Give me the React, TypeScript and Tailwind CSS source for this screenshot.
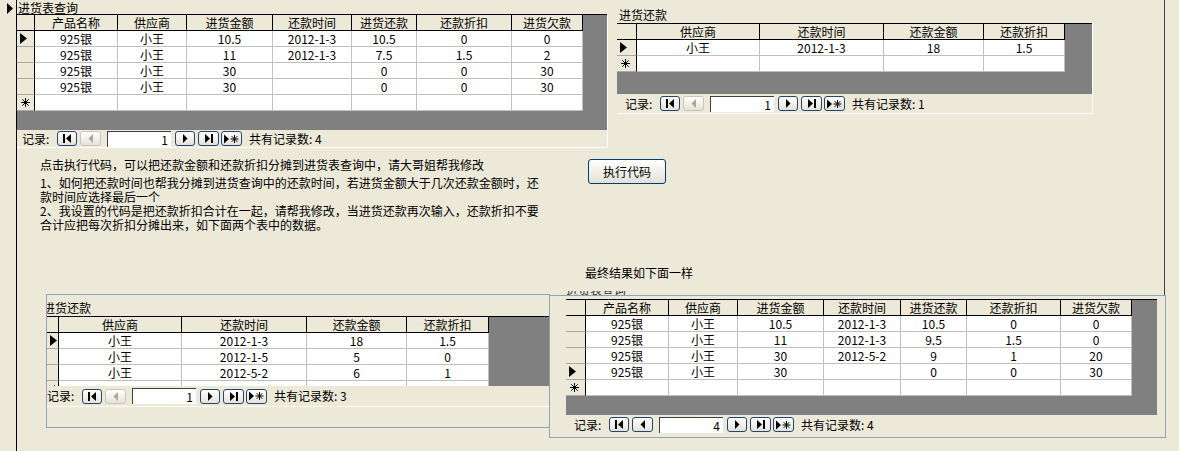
import React from 'react';

type Sheet = {
  sel: string;
  cols: string[];
  labels: string[];
  rows: string[][];
  current: number;
};

const mainLabels = ['产品名称', '供应商', '进货金额', '还款时间', '进货还款', '还款折扣', '进货欠款'];
const payLabels = ['供应商', '还款时间', '还款金额', '还款折扣'];

const topLeft: Sheet = {
  sel: 'w-[18px]',
  cols: ['w-[83px]', 'w-[69px]', 'w-[86px]', 'w-[79px]', 'w-[65px]', 'w-[95px]', 'w-[71px]'],
  labels: mainLabels,
  rows: [
    ['925银', '小王', '10.5', '2012-1-3', '10.5', '0', '0'],
    ['925银', '小王', '11', '2012-1-3', '7.5', '1.5', '2'],
    ['925银', '小王', '30', '', '0', '0', '30'],
    ['925银', '小王', '30', '', '0', '0', '30'],
  ],
  current: 0,
};

const topRight: Sheet = {
  sel: 'w-[20px]',
  cols: ['w-[123px]', 'w-[124px]', 'w-[100px]', 'w-[81px]'],
  labels: payLabels,
  rows: [['小王', '2012-1-3', '18', '1.5']],
  current: 0,
};

const bottomLeft: Sheet = {
  sel: 'w-[12px]',
  cols: ['w-[123px]', 'w-[125px]', 'w-[100px]', 'w-[82px]'],
  labels: payLabels,
  rows: [
    ['小王', '2012-1-3', '18', '1.5'],
    ['小王', '2012-1-5', '5', '0'],
    ['小王', '2012-5-2', '6', '1'],
  ],
  current: 0,
};

const bottomRight: Sheet = {
  sel: 'w-[20px]',
  cols: ['w-[83px]', 'w-[69px]', 'w-[86px]', 'w-[77px]', 'w-[66px]', 'w-[94px]', 'w-[71px]'],
  labels: mainLabels,
  rows: [
    ['925银', '小王', '10.5', '2012-1-3', '10.5', '0', '0'],
    ['925银', '小王', '11', '2012-1-3', '9.5', '1.5', '0'],
    ['925银', '小王', '30', '2012-5-2', '9', '1', '20'],
    ['925银', '小王', '30', '', '0', '0', '30'],
  ],
  current: 3,
};

function Pointer() {
  return (
    <svg width="7" height="11" viewBox="0 0 7 11" className="ml-[3px]">
      <polygon points="0,0 7,5.5 0,11" fill="#000" />
    </svg>
  );
}

function Star() {
  return (
    <svg width="9" height="9" viewBox="0 0 9 9" className="ml-[4px]">
      <g stroke="#000" strokeWidth="1">
        <line x1="4.5" y1="0" x2="4.5" y2="9" />
        <line x1="0" y1="4.5" x2="9" y2="4.5" />
        <line x1="1.3" y1="1.3" x2="7.7" y2="7.7" />
        <line x1="7.7" y1="1.3" x2="1.3" y2="7.7" />
      </g>
    </svg>
  );
}

// datasheet grid: header, rows, new-record row, grey background behind
function Grid({ s, h }: { s: Sheet; h: string }) {
  return (
    <div className={`${h} w-full overflow-hidden border-t border-black bg-[#808080]`}>
      <div className="flex h-[16px] w-max border-b border-black bg-[#ECE9D8]">
        <div className={`${s.sel} shrink-0 border-r border-black`} />
        {s.labels.map((l, i) => (
          <div key={l} className={`${s.cols[i]} shrink-0 border-r border-black text-center leading-[15px]`}>
            {l}
          </div>
        ))}
      </div>
      {[...s.rows, null].map((r, ri) => (
        <div key={ri} className="flex h-[16px] w-max">
          <div
            className={`${s.sel} flex shrink-0 items-center border-r border-b border-r-black border-b-[#a8a8a8] bg-[#ECE9D8]`}
          >
            {r && ri === s.current && <Pointer />}
            {!r && <Star />}
          </div>
          {s.cols.map((w, ci) => (
            <div
              key={ci}
              className={`${w} shrink-0 border-r border-b border-[#c0c0c0] bg-white text-center leading-[15px]`}
            >
              {r ? r[ci] : ''}
            </div>
          ))}
        </div>
      ))}
    </div>
  );
}

function Icon({ kind, on }: { kind: string; on: boolean }) {
  const c = on ? '#000' : '#aca899';
  if (kind === 'first')
    return (
      <svg width="10" height="9" viewBox="0 0 10 9">
        <rect x="1" y="0" width="2" height="9" fill={c} />
        <polygon points="9,0 9,9 4,4.5" fill={c} />
      </svg>
    );
  if (kind === 'prev')
    return (
      <svg width="10" height="9" viewBox="0 0 10 9">
        <polygon points="7,0 7,9 2.5,4.5" fill={c} />
      </svg>
    );
  if (kind === 'next')
    return (
      <svg width="10" height="9" viewBox="0 0 10 9">
        <polygon points="3,0 3,9 7.5,4.5" fill={c} />
      </svg>
    );
  if (kind === 'last')
    return (
      <svg width="10" height="9" viewBox="0 0 10 9">
        <polygon points="1,0 1,9 6,4.5" fill={c} />
        <rect x="7" y="0" width="2" height="9" fill={c} />
      </svg>
    );
  return (
    <svg width="15" height="10" viewBox="0 0 15 10">
      <polygon points="0,0.5 0,9.5 5,5" fill={c} />
      <g stroke={c} strokeWidth="1">
        <line x1="10.5" y1="1" x2="10.5" y2="9" />
        <line x1="6.5" y1="5" x2="14.5" y2="5" />
        <line x1="7.7" y1="2.2" x2="13.3" y2="7.8" />
        <line x1="13.3" y1="2.2" x2="7.7" y2="7.8" />
      </g>
    </svg>
  );
}

function NavBtn({ kind, w, on = true, gap }: { kind: string; w: string; on?: boolean; gap: string }) {
  return (
    <div
      className={`${w} ${gap} flex h-[15px] shrink-0 items-center justify-center rounded-[3px] border bg-gradient-to-b from-white to-[#e4e2d8] ${
        on ? 'border-[#27446f]' : 'border-[#c9c7ba]'
      }`}
    >
      <Icon kind={kind} on={on} />
    </div>
  );
}

function Nav({ pos, total, prevOn, pad, h }: { pos: number; total: number; prevOn: boolean; pad: string; h: string }) {
  return (
    <div className={`${h} ${pad} flex items-center whitespace-nowrap bg-[#ECE9D8]`}>
      <span className="w-[35px] shrink-0">记录:</span>
      <NavBtn kind="first" w="w-[20px]" gap="" />
      <NavBtn kind="prev" w="w-[21px]" gap="ml-[3px]" on={prevOn} />
      <div className="ml-[6px] h-[16px] w-[64px] shrink-0 border-t border-l border-t-[#404040] border-l-[#404040] bg-white pr-[3px] text-right leading-[15px]">
        {pos}
      </div>
      <NavBtn kind="next" w="w-[20px]" gap="ml-[4px]" />
      <NavBtn kind="last" w="w-[21px]" gap="ml-[3px]" />
      <NavBtn kind="new" w="w-[21px]" gap="ml-[2px]" />
      <span className="ml-[7px]">共有记录数: {total}</span>
    </div>
  );
}

export default function App() {
  return (
    <div className="relative h-[451px] w-[1179px] overflow-hidden bg-[#ECE9D8] text-[12px] text-black [font-family:'Noto_Sans_CJK_SC','Noto_Sans',sans-serif]">
      {/* form record selector strip */}
      <svg width="6" height="11" viewBox="0 0 6 11" className="absolute left-[7px] top-[3px]">
        <polygon points="0,0 6,5.5 0,11" fill="#000" />
      </svg>
      <div className="absolute left-[16px] top-0 h-[451px] w-px bg-black" />
      <div className="absolute left-[1164px] top-0 h-[438px] w-px bg-[#404040]" />

      {/* 进货表查询 subform */}
      <div className="absolute left-[18px] top-[1px] leading-[13px]">进货表查询</div>
      <div className="absolute left-[17px] top-[14px] w-[591px] border-r border-b border-white">
        <Grid s={topLeft} h="h-[116px]" />
        <Nav pos={1} total={4} prevOn={false} pad="pl-[5px]" h="h-[17px]" />
      </div>

      {/* 进货还款 subform */}
      <div className="absolute left-[619px] top-[8px] leading-[14px]">进货还款</div>
      <div className="absolute left-[617px] top-[23px] w-[476px] border-r border-b border-white">
        <Grid s={topRight} h="h-[71px]" />
        <Nav pos={1} total={1} prevOn={false} pad="pl-[8px]" h="h-[19px]" />
      </div>

      {/* notes */}
      <div className="absolute left-[40px] top-[158px] whitespace-nowrap leading-[14px]">
        点击执行代码，可以把还款金额和还款折扣分摊到进货表查询中，请大哥姐帮我修改
      </div>
      <div className="absolute left-[40px] top-[176px] whitespace-nowrap leading-[14px]">
        <div>1、如何把还款时间也帮我分摊到进货查询中的还款时间，若进货金额大于几次还款金额时，还</div>
        <div>款时间应选择最后一个</div>
        <div>2、我设置的代码是把还款折扣合计在一起，请帮我修改，当进货还款再次输入，还款折扣不要</div>
        <div>合计应把每次折扣分摊出来，如下面两个表中的数据。</div>
      </div>

      <button className="absolute left-[588px] top-[159px] flex h-[25px] w-[78px] items-center justify-center rounded-[3px] border border-[#003c74] bg-gradient-to-b from-white to-[#e3e1d6] text-[12px]">
        执行代码
      </button>

      <div className="absolute left-[585px] top-[266px] leading-[14px]">最终结果如下面一样</div>

      {/* bottom-left: 进货还款 result */}
      <div className="absolute left-[46px] top-[294px] h-[134px] w-[504px] overflow-hidden border border-[#8ea3b8]">
        <div className="relative h-[21px]">
          <div className="absolute -left-[4px] top-[6px] leading-[14px]">进货还款</div>
        </div>
        <Grid s={bottomLeft} h="h-[70px]" />
        <Nav pos={1} total={3} prevOn={false} pad="pl-0" h="h-[20px]" />
        <div className="border-t border-white" />
      </div>

      {/* bottom-right: 进货表查询 result, its label clipped by the frame */}
      <div className="absolute left-[566px] top-[291px] h-[5px] w-[80px] overflow-hidden">
        <div className="mt-[-8px] leading-[14px] text-[#333]">进货表查询</div>
      </div>
      <div className="absolute left-[549px] top-[295px] h-[143px] w-[617px] border border-[#8ea3b8] bg-[#ECE9D8] pt-[3px] pl-[16px]">
        <div className="w-[591px]">
          <Grid s={bottomRight} h="h-[116px]" />
          <Nav pos={4} total={4} prevOn={true} pad="pl-[8px]" h="h-[19px]" />
        </div>
      </div>
    </div>
  );
}
